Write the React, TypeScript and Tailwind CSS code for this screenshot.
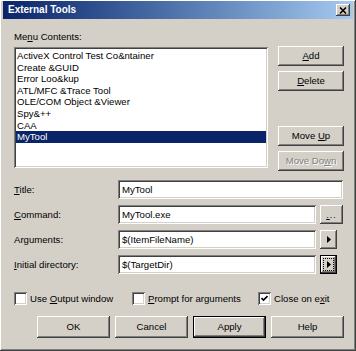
import React from "react";

const raised =
  "shadow-[inset_-1px_-1px_0_#404040,inset_1px_1px_0_#ffffff,inset_-2px_-2px_0_#808080,inset_2px_2px_0_#d4d0c8]";
const sunken =
  "shadow-[inset_1px_1px_0_#808080,inset_-1px_-1px_0_#ffffff,inset_2px_2px_0_#404040,inset_-2px_-2px_0_#d4d0c8]";

const items = [
  "ActiveX Control Test Co&ntainer",
  "Create &GUID",
  "Error Loo&kup",
  "ATL/MFC &Trace Tool",
  "OLE/COM Object &Viewer",
  "Spy&++",
  "CAA",
  "MyTool",
];

function Btn({
  children,
  className = "",
  isDefault = false,
  disabled = false,
}: {
  children: React.ReactNode;
  className?: string;
  isDefault?: boolean;
  disabled?: boolean;
}) {
  if (isDefault) {
    return (
      <div className={`border border-black ${className}`}>
        <div
          className={`w-full h-full flex items-center justify-center bg-[#d4d0c8] ${raised}`}
        >
          {children}
        </div>
      </div>
    );
  }
  return (
    <div
      className={`flex items-center justify-center bg-[#d4d0c8] ${raised} ${
        disabled ? "text-[#808080] [text-shadow:1px_1px_0_#ffffff]" : ""
      } ${className}`}
    >
      {children}
    </div>
  );
}

function Arrow() {
  return (
    <svg width="4" height="7" viewBox="0 0 4 7">
      <path d="M0 0 L4 3.5 L0 7 Z" fill="#000" />
    </svg>
  );
}

function CheckBox({ checked = false }: { checked?: boolean }) {
  return (
    <div
      className={`w-[13px] h-[13px] bg-white flex items-center justify-center shrink-0 ${sunken}`}
    >
      {checked && (
        <svg width="7" height="7" viewBox="0 0 7 7">
          <path
            d="M0.5 3 L2.5 5 L6.5 1"
            stroke="#000"
            strokeWidth="1.6"
            fill="none"
          />
        </svg>
      )}
    </div>
  );
}

function Field({ value, width }: { value: string; width: string }) {
  return (
    <div
      className={`h-[19px] bg-white flex items-center pl-[4px] ${sunken} ${width}`}
    >
      {value}
    </div>
  );
}

export default function App() {
  return (
    <div
      className={`w-[356px] h-[351px] bg-[#d4d0c8] text-black text-[9.6px] leading-[12px] ${raised}`}
      style={{ fontFamily: '"Liberation Sans", Arial, sans-serif' }}
    >
      {/* Title bar */}
      <div className="mx-[3px] pt-[1px]">
        <div className="h-[18px] bg-linear-to-r from-[#0a246a] to-[#a6caf0] flex items-center justify-between pl-[5px] pr-[3px]">
          <span className="text-white font-bold text-[10px]">
            External Tools
          </span>
          <div
            className={`w-[14px] h-[12px] bg-[#d4d0c8] flex items-center justify-center ${raised}`}
          >
            <svg width="8" height="7" viewBox="0 0 8 7">
              <path
                d="M1 0.5 L7 6.5 M7 0.5 L1 6.5"
                stroke="#000"
                strokeWidth="1.6"
              />
            </svg>
          </div>
        </div>
      </div>

      <div className="pl-[14px] pr-[12px]">
        {/* Menu contents */}
        <div className="mt-[12px] h-[12px]">
          Me<span className="underline">n</span>u Contents:
        </div>

        <div className="mt-[3px] flex">
          <div className={`mt-[1px] w-[254px] h-[121px] bg-white p-[2px] ${sunken}`}>
            <div className="pt-[1px]">
              {items.map((item, i) => (
                <div
                  key={item}
                  className={`h-[11.6px] leading-[11.6px] pl-[1px] whitespace-nowrap ${
                    i === items.length - 1 ? "bg-[#0a246a] text-white" : ""
                  }`}
                >
                  {item}
                </div>
              ))}
            </div>
          </div>

          <div className="ml-[10px] w-[66px] flex flex-col">
            <Btn className="h-[20px]">
              <span>
                <u>A</u>dd
              </span>
            </Btn>
            <Btn className="h-[20px] mt-[5px]">
              <span>
                <u>D</u>elete
              </span>
            </Btn>
            <Btn className="h-[20px] mt-[35px]">
              <span>
                Move <u>U</u>p
              </span>
            </Btn>
            <Btn className="h-[20px] mt-[5px]" disabled>
              <span>
                Move Do<u>w</u>n
              </span>
            </Btn>
          </div>
        </div>

        {/* Fields */}
        <div className="mt-[9px] flex flex-col gap-[6px]">
          <div className="flex items-center h-[19px]">
            <div className="w-[104px]">
              <u>T</u>itle:
            </div>
            <Field value="MyTool" width="w-[225px]" />
          </div>
          <div className="flex items-center h-[19px]">
            <div className="w-[104px]">
              <u>C</u>ommand:
            </div>
            <Field value="MyTool.exe" width="w-[198px]" />
            <Btn className="ml-[4px] w-[23px] h-[19px]">
              <span className="text-[9px] leading-[9px] mt-[2px] tracking-[1px]">
                <u>.</u>..
              </span>
            </Btn>
          </div>
          <div className="flex items-center h-[19px]">
            <div className="w-[104px]">Arguments:</div>
            <Field value="$(ItemFileName)" width="w-[198px]" />
            <Btn className="ml-[4px] w-[17px] h-[19px]">
              <Arrow />
            </Btn>
          </div>
          <div className="flex items-center h-[19px]">
            <div className="w-[104px]">
              <u>I</u>nitial directory:
            </div>
            <Field value="$(TargetDir)" width="w-[198px]" />
            <div className="ml-[4px] w-[17px] h-[19px] border border-black">
              <div
                className={`w-full h-full bg-[#d4d0c8] flex items-center justify-center p-[2px] ${raised}`}
              >
                <div className="w-full h-full border border-dotted border-black flex items-center justify-center">
                  <Arrow />
                </div>
              </div>
            </div>
          </div>
        </div>

        {/* Checkboxes */}
        <div className="mt-[18px] flex items-center h-[13px]">
          <div className="w-[118px] flex items-center gap-[3px]">
            <CheckBox />
            <span>
              Use <u>O</u>utput window
            </span>
          </div>
          <div className="w-[126px] flex items-center gap-[3px]">
            <CheckBox />
            <span>
              <u>P</u>rompt for arguments
            </span>
          </div>
          <div className="flex items-center gap-[3px]">
            <CheckBox checked />
            <span>
              Close on e<u>x</u>it
            </span>
          </div>
        </div>

        {/* Buttons */}
        <div className="mt-[11px] pl-[23px] flex gap-[5px]">
          <Btn className="w-[73px] h-[22px]">OK</Btn>
          <Btn className="w-[73px] h-[22px]">Cancel</Btn>
          <Btn className="w-[73px] h-[22px]" isDefault>
            Apply
          </Btn>
          <Btn className="w-[73px] h-[22px]">Help</Btn>
        </div>
      </div>
    </div>
  );
}
